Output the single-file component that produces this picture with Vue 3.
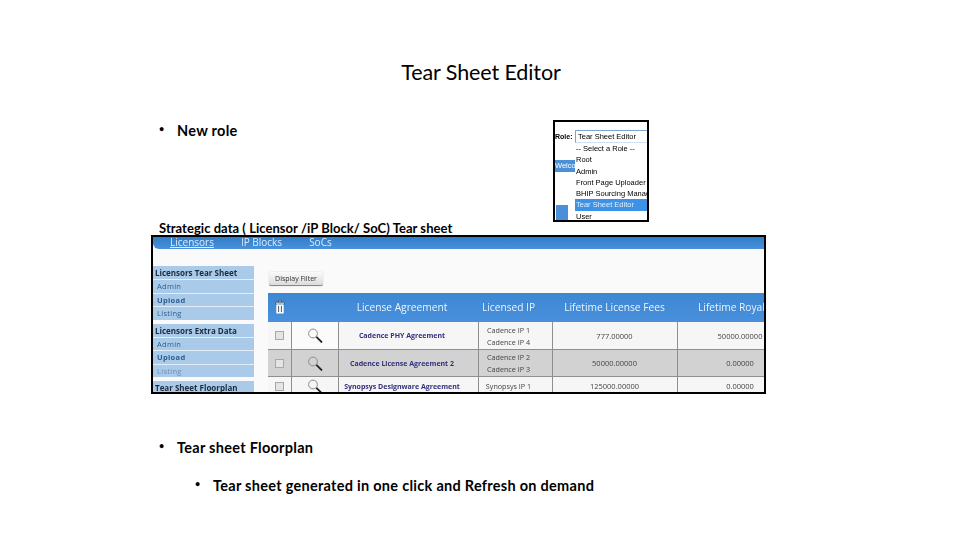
<template>
  <main class="slide">
    <h1 class="title">Tear Sheet Editor</h1>
    <section class="role-row">
      <p class="bullet">New role</p>
      <div class="role-shot">
        <div class="role-head"><b>Role:</b><span class="role-select">Tear Sheet Editor</span></div>
        <div class="role-body">
          <div class="role-side">
            <span class="welcome">Welco</span>
            <span class="side-block"></span>
          </div>
          <ul class="role-list">
            <li v-for="r in roles" :key="r" :class="{ picked: r === 'Tear Sheet Editor' }">{{ r }}</li>
          </ul>
        </div>
      </div>
    </section>
    <p class="caption">Strategic data ( Licensor /iP Block/ SoC) Tear sheet</p>
    <section class="app-shot">
      <nav class="top-nav">
        <a class="active">Licensors</a><a>IP Blocks</a><a>SoCs</a>
      </nav>
      <div class="app-body">
        <aside class="side">
          <div v-for="g in groups" :key="g.title" class="group">
            <div class="group-title">{{ g.title }}</div>
            <div v-for="l in g.links" :key="l" class="link" :class="{ faint: g.faint === l, strong: l === 'Upload' }">{{ l }}</div>
          </div>
        </aside>
        <div class="content">
          <button class="filter">Display Filter</button>
          <table class="grid">
            <colgroup>
              <col class="c1" /><col class="c2" /><col class="c3" />
              <col class="c4" /><col class="c5" /><col class="c6" />
            </colgroup>
            <thead>
              <tr>
                <th>
                  <svg class="icon" width="10" height="14" viewBox="0 0 10 14">
                    <path d="M3.5 .8h3v1.4h-3zM.6 2.2h8.8v1.8H.6z" fill="#fff" stroke="#16324f" stroke-width=".6" />
                    <path d="M1.3 4.4h7.4v9.1H1.3z" fill="#fff" />
                    <path d="M3.6 6v6M6.4 6v6" stroke="#555" stroke-width="1" />
                  </svg>
                </th>
                <th></th>
                <th class="shift">License Agreement</th>
                <th class="shift-ip">Licensed IP</th>
                <th>Lifetime License Fees</th>
                <th class="clip">Lifetime Royal</th>
              </tr>
            </thead>
            <tbody>
              <tr v-for="(row, i) in rows" :key="row.name" :class="['odd', 'even', 'last'][i]">
                <td class="first"><span class="check"></span></td>
                <td class="second">
                  <svg class="icon" width="16" height="15" viewBox="0 0 16 15">
                    <circle cx="6" cy="5.5" r="4.4" fill="none" stroke="#8a8a8a" stroke-width="1" />
                    <path d="M9.4 8.9 15 14.5" stroke="#222" stroke-width="1.8" />
                  </svg>
                </td>
                <td class="agreement">{{ row.name }}</td>
                <td class="ip"><div v-for="p in row.ips" :key="p">{{ p }}</div></td>
                <td class="num">{{ row.fee }}</td>
                <td class="num">{{ row.royal }}</td>
              </tr>
            </tbody>
          </table>
        </div>
      </div>
    </section>
    <p class="bullet floor">Tear sheet Floorplan</p>
    <p class="bullet sub">Tear sheet generated in one click and Refresh on demand</p>
  </main>
</template>

<script setup>
const roles = ['-- Select a Role --', 'Root', 'Admin', 'Front Page Uploader', 'BHIP Sourcing Manager', 'Tear Sheet Editor', 'User']
const groups = [
  { title: 'Licensors Tear Sheet', links: ['Admin', 'Upload', 'Listing'] },
  { title: 'Licensors Extra Data', links: ['Admin', 'Upload', 'Listing'], faint: 'Listing' },
  { title: 'Tear Sheet Floorplan', links: [] }
]
const rows = [
  { name: 'Cadence PHY Agreement', ips: ['Cadence IP 1', 'Cadence IP 4'], fee: '777.00000', royal: '50000.00000' },
  { name: 'Cadence License Agreement 2', ips: ['Cadence IP 2', 'Cadence IP 3'], fee: '50000.00000', royal: '0.00000' },
  { name: 'Synopsys Designware Agreement', ips: ['Synopsys IP 1'], fee: '125000.00000', royal: '0.00000' }
]
</script>

<style>
html, body { margin: 0; background: #fff; }
</style>

<style scoped>
.slide {
  width: 960px;
  height: 540px;
  overflow: hidden;
  background: #fff;
  color: #000;
  font-family: Lato, "Liberation Sans", sans-serif;
}
p, h1, ul { margin: 0; padding: 0; }
.title {
  padding: 59px 0 0 2px;
  height: 26px;
  line-height: 26px;
  font-size: 21.5px;
  font-weight: 400;
  text-align: center;
  letter-spacing: -0.1px;
}
.role-row {
  display: flex;
  justify-content: space-between;
  margin-top: 35px;
  padding: 0 311px 0 159px;
  height: 102px;
}
.bullet {
  position: relative;
  font-size: 14.5px;
  font-weight: 700;
  line-height: 20px;
  padding-left: 18px;
  letter-spacing: 0.28px;
}
.bullet::before {
  content: "•";
  position: absolute;
  left: 0;
  top: -2px;
  font-size: 9px;
}
.role-row .bullet { margin-top: 1px; }
.caption {
  margin: 0 0 0 159px;
  height: 13px;
  line-height: 13px;
  font-size: 13px;
  font-weight: 700;
  letter-spacing: 0.04px;
}
.role-shot {
  box-sizing: border-box;
  width: 96px;
  height: 102px;
  border: 2px solid #000;
  overflow: hidden;
  font-family: "Liberation Sans", sans-serif;
  font-size: 7.5px;
  background: #fff;
  filter: blur(0.45px);
}
.role-head {
  display: flex;
  align-items: flex-end;
  height: 21px;
  white-space: nowrap;
}
.role-head b { font-size: 7px; width: 20px; flex: none; line-height: 12px; }
.role-select {
  flex: 1;
  height: 11px;
  line-height: 11px;
  border: 1px solid #7aa5d4;
  border-bottom-color: #cfe0f2;
  border-right: 0;
  padding-left: 2px;
}
.role-body { display: flex; height: 79px; }
.role-side { width: 20px; flex: none; display: flex; flex-direction: column; }
.welcome {
  margin-top: 17px;
  height: 12px;
  line-height: 12px;
  background: #4a90d9;
  color: #fff;
  font-size: 7.5px;
  overflow: hidden;
}
.side-block {
  margin: 33px 0 0 1px;
  height: 15px;
  width: 12px;
  background: #4a90d9;
}
.role-list { list-style: none; flex: 1; white-space: nowrap; overflow: hidden; }
.role-list li { height: 11.3px; line-height: 11.3px; padding-left: 1px; }
.role-list .picked { background: #3e92e6; color: #dfefff; }

.app-shot {
  box-sizing: border-box;
  width: 615px;
  height: 159px;
  margin: 0 0 0 151px;
  border: 2px solid #000;
  overflow: hidden;
  background: #fafafa;
  font-family: "Open Sans", sans-serif;
}
.top-nav {
  height: 12px;
  display: flex;
  background: linear-gradient(#2f7dc9, #4a92da);
  border-bottom-left-radius: 6px;
  padding-left: 17px;
  color: #dcecff;
  font-size: 10px;
  line-height: 11px;
  gap: 27px;
  filter: blur(0.4px);
}
.top-nav .active { text-decoration: underline; }
.app-body {
  display: flex;
  padding-top: 17px;
  filter: blur(0.4px);
}
.side {
  width: 101px;
  flex: none;
  font-size: 7.5px;
}
.group { margin-bottom: 4px; background: #a9cbe9; }
.group-title {
  height: 13px;
  line-height: 13px;
  padding-left: 2px;
  font-size: 8px;
  font-weight: 700;
  color: #1c2a3a;
  white-space: nowrap;
}
.link {
  height: 13.5px;
  line-height: 13px;
  padding-left: 4px;
  color: #2d5d8f;
  border-top: 1px solid #e4eef8;
  box-sizing: border-box;
  letter-spacing: 0.3px;
}
.link.strong { font-weight: 700; }
.link.faint { color: #6f8fb0; }
.content { width: 510px; flex: none; margin-left: 14px; white-space: nowrap; }
.filter {
  display: block;
  margin: 6px 0 7px 1px;
  width: 54px;
  height: 14px;
  padding: 0;
  border: 0;
  border-bottom: 1px solid #888;
  border-radius: 2px;
  background: linear-gradient(#fafafa, #dcdcdc);
  box-shadow: 0 0 1px #999;
  font: 7px "Open Sans", sans-serif;
  color: #333;
}
.grid {
  width: 535px;
  table-layout: fixed;
  border-collapse: collapse;
}
.c1 { width: 23px; }
.c2 { width: 47px; }
.c3 { width: 140px; }
.c4 { width: 74px; }
.c5 { width: 125px; }
.c6 { width: 126px; }
.icon { display: block; margin: 0 auto; }
.grid th {
  height: 29px;
  padding: 0 0 1px;
  box-sizing: border-box;
  background: linear-gradient(#3c87d3, #4a90dc);
  color: #eaf4ff;
  font-size: 10.2px;
  font-weight: 400;
  overflow: hidden;
}
.grid th.clip { text-align: left; padding-left: 21px; }
.grid th.shift { padding-right: 12px; }
.grid th.shift-ip { padding-right: 13px; }
.grid td {
  padding: 0;
  text-align: center;
  border-right: 1px solid #8f8f8f;
  border-bottom: 1px solid #8f8f8f;
  overflow: hidden;
}
.odd td { height: 27px; background: #f6f6f6; }
.odd .second { background: #fbfbfb; }
.even td { height: 26px; background: #d2d2d2; }
.last td { height: 18px; background: #f6f6f6; }
.check {
  display: block;
  box-sizing: border-box;
  width: 9px;
  height: 9px;
  margin: 0 auto;
  border: 1px solid #a8a8a8;
  background: #e4e4e4;
}
.grid .agreement {
  font-size: 7px;
  font-weight: 700;
  color: #34307c;
  padding-right: 12px;
}
.grid .ip { font-size: 7.2px; line-height: 12px; color: #444; padding-right: 13px; }
.num { font-size: 7.5px; color: #444; }
.floor { margin: 44px 0 0 159px; }
.sub { margin: 18px 0 0 195px; }
</style>
